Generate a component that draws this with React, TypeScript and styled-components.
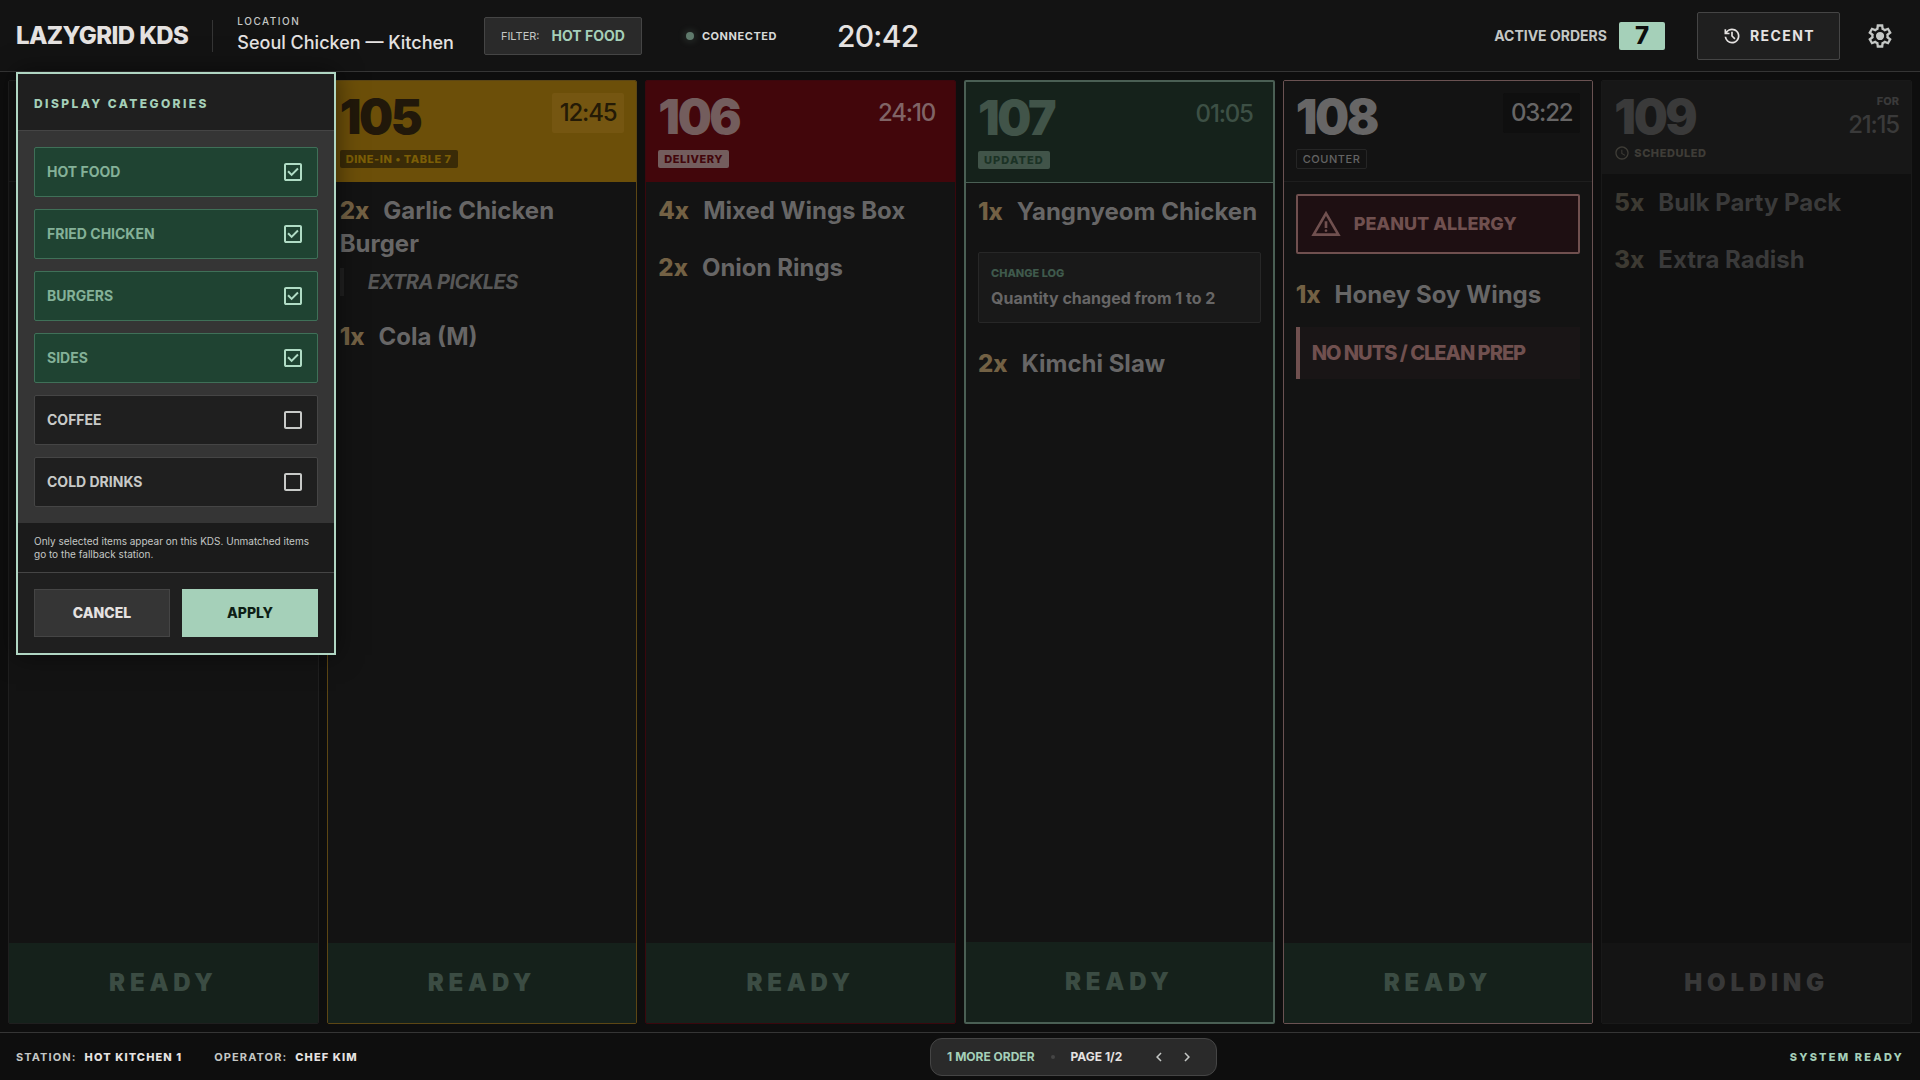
import React, { useState } from "react";
import styled, { createGlobalStyle, css } from "styled-components";
import { MdCheckBoxOutlineBlank, MdSchedule, MdChevronLeft, MdChevronRight } from "react-icons/md";

const mint = "#a5d0b9";

const GlobalStyle = createGlobalStyle`
  *, *::before, *::after { box-sizing: border-box; }
  html, body, #root { height: 100%; }
  body {
    margin: 0;
    background: #0e0e0e;
    color: #e5e2e1;
    font-family: Inter, "Liberation Sans", sans-serif;
    overflow: hidden;
  }
  button { font-family: inherit; cursor: pointer; }
  h1, h2, h3, p { margin: 0; padding: 0; }
  svg { flex: none; }
`;

const Screen = styled.div`
  position: relative;
  display: flex;
  flex-direction: column;
  height: 100%;
`;

const TopBar = styled.header`
  display: flex;
  align-items: center;
  justify-content: space-between;
  flex: none;
  height: 72px;
  padding: 0 16px;
  background: #131313;
  border-bottom: 1px solid #353535;
`;

const Group = styled.div<{ $gap: number }>`
  display: flex;
  align-items: center;
  gap: ${(p) => p.$gap}px;
`;

const Brand = styled.h1`
  font-size: 24px;
  line-height: 32px;
  font-weight: 800;
  letter-spacing: -0.025em;
`;

const Divider = styled.span`
  width: 1px;
  height: 32px;
  background: #353535;
`;

const Place = styled.div`
  display: flex;
  flex-direction: column;
`;

const PlaceLabel = styled.span`
  font-size: 10px;
  line-height: 15px;
  font-weight: 500;
  letter-spacing: 0.15em;
  color: #c4c7c5;
`;

const PlaceName = styled.span`
  font-size: 18px;
  line-height: 28px;
  font-weight: 500;
`;

const FilterButton = styled.button`
  display: flex;
  align-items: center;
  gap: 12px;
  height: 38px;
  margin-left: 6px;
  padding: 0 16px;
  background: #2a2a2a;
  border: 1px solid #454545;
  border-radius: 2px;
  color: ${mint};
  font-size: 14px;
  line-height: 20px;
  font-weight: 700;
`;

const FilterLabel = styled.span`
  color: #c4c7c5;
  font-size: 11px;
  font-weight: 400;
`;

const Connection = styled.div`
  display: flex;
  align-items: center;
  gap: 8px;
  margin-left: 20px;
  font-size: 11px;
  line-height: 16px;
  font-weight: 700;
  letter-spacing: 0.05em;
  color: #d8dad8;
`;

const Dot = styled.span`
  width: 8px;
  height: 8px;
  border-radius: 50%;
  background: #5f7a6c;
  box-shadow: 0 0 8px rgba(165, 208, 185, 0.3);
`;

const Clock = styled.time`
  margin-left: 36px;
  font-size: 30px;
  line-height: 36px;
  font-weight: 500;
  letter-spacing: -0.025em;
`;

const OrdersLabel = styled.span`
  font-size: 14px;
  line-height: 20px;
  font-weight: 700;
  color: #c4c7c5;
`;

const OrdersCount = styled.span`
  padding: 0 16px;
  background: ${mint};
  border-radius: 2px;
  color: #0e0e0e;
  font-size: 24px;
  line-height: 28px;
  font-weight: 800;
`;

const RecentButton = styled.button`
  display: flex;
  align-items: center;
  gap: 8px;
  height: 48px;
  padding: 0 24px;
  background: #1f1f1f;
  border: 1px solid #454545;
  border-radius: 2px;
  color: #e5e2e1;
  font-size: 14px;
  line-height: 20px;
  font-weight: 700;
  letter-spacing: 0.1em;
`;

const IconButton = styled.button<{ $size: number }>`
  display: flex;
  align-items: center;
  justify-content: center;
  width: ${(p) => p.$size}px;
  height: ${(p) => p.$size}px;
  padding: 0;
  border: 0;
  background: none;
  color: #c4c7c5;
`;

const Board = styled.main`
  flex: 1;
  min-height: 0;
  display: grid;
  grid-template-columns: repeat(6, minmax(0, 1fr));
  gap: 8px;
  padding: 8px;
`;

type Tone = "plain" | "late" | "overdue" | "updated" | "allergy" | "held";

const tones = {
  plain: { edge: "#1f1f1f", width: 1, head: "#131313", rule: "#1f1f1f", number: "#6b6a6a", time: "#6b6a6a", chip: "#131313", timeBg: "#0f0f0f" },
  late: { edge: "#5c4614", width: 1, head: "#6c4f09", rule: "#6c4f09", number: "#21180a", time: "#241a06", chip: "#7c5e06", timeBg: "#755611" },
  overdue: { edge: "#3a070d", width: 1, head: "#42060b", rule: "#42060b", number: "#735d5d", time: "#806466", chip: "#42060b", timeBg: "transparent" },
  updated: { edge: "#4a5f54", width: 2, head: "#15221b", rule: "#4a5f54", number: "#415449", time: "#3d5045", chip: "#1b3225", timeBg: "transparent" },
  allergy: { edge: "#6a5252", width: 1, head: "#131313", rule: "#1e1e1e", number: "#676666", time: "#676666", chip: "#646464", timeBg: "#0f0f0f" },
  held: { edge: "#191919", width: 1, head: "#171717", rule: "#171717", number: "#3a3a3a", time: "#3a3a3a", chip: "#3f3d37", timeBg: "transparent" },
};

const Ticket = styled.article<{ $tone: Tone }>`
  display: flex;
  flex-direction: column;
  min-height: 0;
  overflow: hidden;
  background: ${(p) => (p.$tone === "held" ? "#101010" : "#131313")};
  border: ${(p) => tones[p.$tone].width}px solid ${(p) => tones[p.$tone].edge};
  border-radius: 2px;
`;

const TicketHead = styled.header<{ $tone: Tone }>`
  display: flex;
  justify-content: space-between;
  align-items: flex-start;
  min-height: ${(p) => (p.$tone === "held" ? 93 : 101)}px;
  padding: 12px;
  background: ${(p) => tones[p.$tone].head};
  border-bottom: 1px solid ${(p) => tones[p.$tone].rule};
`;

const TicketId = styled.div<{ $tone: Tone }>`
  display: flex;
  flex-direction: column;
  align-items: flex-start;
  gap: ${(p) => (p.$tone === "held" ? 4 : 8)}px;
`;

const TicketNumber = styled.h2<{ $tone: Tone }>`
  font-size: 48px;
  line-height: 48px;
  font-weight: 900;
  letter-spacing: -0.05em;
  color: ${(p) => tones[p.$tone].number};
`;

const Chip = styled.span<{ $tone: Tone }>`
  margin: 1px 0;
  padding: 0 6px;
  border-radius: 2px;
  font-size: 11px;
  line-height: 18px;
  font-weight: 800;
  letter-spacing: 0.05em;
  color: ${(p) => tones[p.$tone].chip};
  ${(p) => p.$tone === "late" && css`background: #3a2b07;`}
  ${(p) => p.$tone === "overdue" && css`background: #735d5d;`}
  ${(p) => p.$tone === "updated" && css`background: #415449; letter-spacing: 0.1em;`}
  ${(p) =>
    p.$tone === "allergy" &&
    css`
      margin: 0;
      border: 1px solid #252525;
      font-weight: 500;
    `}
`;

const Scheduled = styled.span`
  display: flex;
  align-items: center;
  gap: 4px;
  font-size: 11px;
  line-height: 16px;
  font-weight: 800;
  letter-spacing: 0.05em;
  color: #3f3d37;
`;

const TimeStack = styled.div`
  display: flex;
  flex-direction: column;
  align-items: flex-end;
`;

const DueLabel = styled.span`
  font-size: 11px;
  line-height: 16px;
  font-weight: 800;
  color: #3a3a3a;
`;

const Timer = styled.time<{ $tone: Tone }>`
  padding: ${(p) => (p.$tone === "held" ? "0" : "4px 8px")};
  background: ${(p) => tones[p.$tone].timeBg};
  border-radius: 2px;
  font-size: 24px;
  line-height: 32px;
  font-weight: 500;
  letter-spacing: -0.05em;
  color: ${(p) => tones[p.$tone].time};
`;

const TicketBody = styled.div`
  flex: 1;
  min-height: 0;
  display: flex;
  flex-direction: column;
  gap: 24px;
  padding: 12px;
`;

const Item = styled.p<{ $dim?: boolean }>`
  font-size: 24px;
  line-height: 33px;
  font-weight: 700;
  color: ${(p) => (p.$dim ? "#3a3a3a" : "#676666")};
`;

const Qty = styled.span<{ $dim?: boolean }>`
  margin-right: 14px;
  font-weight: 800;
  color: ${(p) => (p.$dim ? "#3d3a32" : "#736144")};
`;

const Modifier = styled.p`
  margin-top: 8px;
  padding-left: 24px;
  border-left: 4px solid #202020;
  font-size: 20px;
  line-height: 28px;
  font-weight: 700;
  font-style: italic;
  letter-spacing: -0.025em;
  color: #575757;
`;

const ChangeLog = styled.section`
  padding: 12px;
  background: #191919;
  border: 1px solid #272727;
  border-radius: 2px;
`;

const ChangeTitle = styled.h3`
  margin-bottom: 6px;
  font-size: 11px;
  line-height: 16px;
  font-weight: 800;
  color: #3f5a4c;
`;

const ChangeText = styled.p`
  font-size: 16px;
  line-height: 23px;
  font-weight: 700;
  color: #676666;
`;

const AllergyAlert = styled.div`
  display: flex;
  align-items: center;
  gap: 12px;
  height: 60px;
  padding: 0 12px;
  background: #1e0f12;
  border: 2px solid #70504f;
  border-radius: 2px;
  color: #70504f;
  font-size: 18px;
  line-height: 28px;
  font-weight: 800;
`;

const PrepNote = styled.p`
  margin-top: 16px;
  padding: 12px;
  background: #191516;
  border-left: 4px solid #70504f;
  font-size: 20px;
  line-height: 28px;
  font-weight: 800;
  letter-spacing: -0.05em;
  color: #70504f;
`;

const BumpButton = styled.button<{ $held?: boolean }>`
  flex: none;
  height: 80px;
  border: 0;
  background: ${(p) => (p.$held ? "#141414" : "#15211b")};
  color: ${(p) => (p.$held ? "#383838" : "#3b4c43")};
  font-size: 24px;
  line-height: 32px;
  font-weight: 900;
  letter-spacing: 0.2em;
`;

const BottomBar = styled.footer`
  display: flex;
  align-items: center;
  justify-content: space-between;
  flex: none;
  height: 48px;
  padding: 0 16px;
  background: #0e0e0e;
  border-top: 1px solid #353535;
  font-size: 11px;
  line-height: 16px;
  font-weight: 700;
  letter-spacing: 0.1em;
  color: #c4c7c5;
`;

const FootValue = styled.b`
  margin-left: 8px;
  font-weight: 800;
  color: #e5e2e1;
`;

const Pager = styled.nav`
  display: flex;
  align-items: center;
  height: 38px;
  padding: 0 16px;
  background: #2a2a2a;
  border: 1px solid #454545;
  border-radius: 12px;
  font-size: 12px;
  line-height: 16px;
  font-weight: 700;
  letter-spacing: 0;
  color: #e5e2e1;
`;

const More = styled.span`
  color: ${mint};
`;

const Bullet = styled.span`
  width: 4px;
  height: 4px;
  margin: 0 16px;
  border-radius: 50%;
  background: #454545;
`;

const Arrows = styled.div`
  display: flex;
  gap: 10px;
  margin: 0 4px 0 28px;
`;

const Status = styled.span`
  font-weight: 800;
  letter-spacing: 0.2em;
  color: ${mint};
`;

const Panel = styled.form`
  position: absolute;
  z-index: 2;
  top: 72px;
  left: 16px;
  width: 320px;
  background: #1f1f1f;
  border: 2px solid #b0d6c3;
  box-shadow: 0 0 24px rgba(0, 0, 0, 0.5);
`;

const PanelTitle = styled.h2`
  padding: 22px 16px 18px;
  border-bottom: 1px solid #454545;
  font-size: 12px;
  line-height: 16px;
  font-weight: 800;
  letter-spacing: 0.2em;
  color: ${mint};
`;

const OptionList = styled.div`
  display: flex;
  flex-direction: column;
  gap: 12px;
  padding: 16px;
  background: #353535;
`;

const Option = styled.label<{ $on: boolean }>`
  position: relative;
  display: flex;
  align-items: center;
  justify-content: space-between;
  height: 50px;
  padding: 0 12px;
  background: ${(p) => (p.$on ? "#1f4332" : "#1f1f1f")};
  border: 1px solid ${(p) => (p.$on ? "#3f7058" : "#454545")};
  border-radius: 2px;
  color: ${(p) => (p.$on ? "#84b198" : "#c8cac8")};
  font-size: 14px;
  line-height: 20px;
  font-weight: 700;
  cursor: pointer;
  svg { color: ${(p) => (p.$on ? "#b0dcc5" : "#c8cac8")}; }
`;

const Tick = styled.input`
  position: absolute;
  inset: 0;
  width: 100%;
  height: 100%;
  margin: 0;
  opacity: 0;
  cursor: pointer;
`;

const Hint = styled.p`
  padding: 12px 16px 11px;
  background: #1b1b1b;
  border-bottom: 1px solid #454545;
  font-size: 10px;
  line-height: 13px;
  color: #c4c7c5;
`;

const Actions = styled.div`
  display: grid;
  grid-template-columns: 1fr 1fr;
  gap: 12px;
  padding: 16px;
`;

const ActionButton = styled.button<{ $primary?: boolean }>`
  height: 48px;
  background: ${(p) => (p.$primary ? mint : "#353535")};
  border: 1px solid ${(p) => (p.$primary ? mint : "#454545")};
  color: ${(p) => (p.$primary ? "#0e1f16" : "#e5e2e1")};
  font-size: 14px;
  line-height: 20px;
  font-weight: 800;
`;

const Glyph = ({ size, d }: { size: number; d: string }) => (
  <svg width={size} height={size} viewBox="0 0 24 24" fill="currentColor" aria-hidden="true">
    <path d={d} />
  </svg>
);

const historyPath =
  "M12 21q-3.45 0-6.012-2.288T3.05 13H5.1q.35 2.6 2.313 4.3T12 19q2.925 0 4.963-2.037T19 12t-2.037-4.963T12 5q-1.725 0-3.225.8T6.25 8H9v2H3V4h2v2.35q1.275-1.6 3.113-2.475T12 3q1.875 0 3.513.713t2.85 1.924 1.925 2.85T21 12t-.712 3.513-1.925 2.85-2.85 1.925T12 21m2.8-4.8L11 12.4V7h2v4.6l3.2 3.2z";

const gearPath =
  "m9.25 22l-.4-3.2q-.325-.125-.612-.3t-.563-.375L4.7 19.375l-2.75-4.75l2.575-1.95Q4.5 12.5 4.5 12.338v-.675q0-.163.025-.338L1.95 9.375l2.75-4.75l2.975 1.25q.275-.2.575-.375t.6-.3l.4-3.2h5.5l.4 3.2q.325.125.613.3t.562.375l2.975-1.25l2.75 4.75l-2.575 1.95q.025.175.025.338v.674q0 .163-.05.338l2.575 1.95l-2.75 4.75l-2.95-1.25q-.275.2-.575.375t-.6.3l-.4 3.2zM11 20h1.975l.35-2.65q.775-.2 1.438-.587t1.212-.938l2.475 1.025l.975-1.7l-2.15-1.625q.125-.35.175-.737T17.5 12t-.05-.787t-.175-.738l2.15-1.625l-.975-1.7l-2.475 1.05q-.55-.575-1.212-.962t-1.438-.588L13 4h-1.975l-.35 2.65q-.775.2-1.437.588t-1.213.937L5.55 7.15l-.975 1.7l2.15 1.6q-.125.375-.175.75t-.05.8q0 .4.05.775t.175.75l-2.15 1.625l.975 1.7l2.475-1.05q.55.575 1.213.963t1.437.587zm1.05-4.5q1.45 0 2.475-1.025T15.55 12t-1.025-2.475T12.05 8.5q-1.475 0-2.488 1.025T8.55 12t1.013 2.475T12.05 15.5";

const checkedPath =
  "m10.6 16.2 7.05-7.05-1.4-1.4-5.65 5.65-2.85-2.85-1.4 1.4zM5 21q-.825 0-1.412-.587T3 19V5q0-.825.588-1.412T5 3h14q.825 0 1.413.588T21 5v14q0 .825-.587 1.413T19 21zm0-2h14V5H5z";

const warningPath =
  "M1 21 12 2l11 19zm3.45-2h15.1L12 6zM12 18q.425 0 .713-.288T13 17t-.288-.712T12 16t-.712.288T11 17t.288.713T12 18m-1-3h2v-5h-2z";

type Order = {
  id: string;
  tone: Tone;
  chip: string;
  time: string;
  body: React.ReactNode;
};

const Line = ({ qty, name, dim, children }: { qty: number; name: string; dim?: boolean; children?: React.ReactNode }) => (
  <div>
    <Item $dim={dim}>
      <Qty $dim={dim}>{qty}x</Qty>
      {name}
    </Item>
    {children}
  </div>
);

const orders: Order[] = [
  { id: "", tone: "plain", chip: "", time: "", body: null },
  {
    id: "105",
    tone: "late",
    chip: "DINE-IN • TABLE 7",
    time: "12:45",
    body: (
      <>
        <Line qty={2} name="Garlic Chicken Burger">
          <Modifier>EXTRA PICKLES</Modifier>
        </Line>
        <Line qty={1} name="Cola (M)" />
      </>
    ),
  },
  {
    id: "106",
    tone: "overdue",
    chip: "DELIVERY",
    time: "24:10",
    body: (
      <>
        <Line qty={4} name="Mixed Wings Box" />
        <Line qty={2} name="Onion Rings" />
      </>
    ),
  },
  {
    id: "107",
    tone: "updated",
    chip: "UPDATED",
    time: "01:05",
    body: (
      <>
        <Line qty={1} name="Yangnyeom Chicken" />
        <ChangeLog>
          <ChangeTitle>CHANGE LOG</ChangeTitle>
          <ChangeText>Quantity changed from 1 to 2</ChangeText>
        </ChangeLog>
        <Line qty={2} name="Kimchi Slaw" />
      </>
    ),
  },
  {
    id: "108",
    tone: "allergy",
    chip: "COUNTER",
    time: "03:22",
    body: (
      <>
        <AllergyAlert role="alert">
          <Glyph size={32} d={warningPath} />
          PEANUT ALLERGY
        </AllergyAlert>
        <Line qty={1} name="Honey Soy Wings">
          <PrepNote>NO NUTS / CLEAN PREP</PrepNote>
        </Line>
      </>
    ),
  },
  {
    id: "109",
    tone: "held",
    chip: "SCHEDULED",
    time: "21:15",
    body: (
      <>
        <Line dim qty={5} name="Bulk Party Pack" />
        <Line dim qty={3} name="Extra Radish" />
      </>
    ),
  },
];

const OrderTicket = ({ order }: { order: Order }) => {
  const { tone } = order;
  const held = tone === "held";
  return (
    <Ticket $tone={tone}>
      <TicketHead $tone={tone}>
        {order.id && (
          <>
            <TicketId $tone={tone}>
              <TicketNumber $tone={tone}>{order.id}</TicketNumber>
              {held ? (
                <Scheduled>
                  <MdSchedule size={16} />
                  {order.chip}
                </Scheduled>
              ) : (
                <Chip $tone={tone}>{order.chip}</Chip>
              )}
            </TicketId>
            <TimeStack>
              {held && <DueLabel>FOR</DueLabel>}
              <Timer $tone={tone}>{order.time}</Timer>
            </TimeStack>
          </>
        )}
      </TicketHead>
      <TicketBody>{order.body}</TicketBody>
      <BumpButton type="button" $held={held}>
        {held ? "HOLDING" : "READY"}
      </BumpButton>
    </Ticket>
  );
};

const categories = ["HOT FOOD", "FRIED CHICKEN", "BURGERS", "SIDES", "COFFEE", "COLD DRINKS"];

const CategoryPanel = () => {
  const [chosen, setChosen] = useState(categories.slice(0, 4));
  const toggle = (name: string) =>
    setChosen((list) => (list.includes(name) ? list.filter((n) => n !== name) : [...list, name]));
  return (
    <Panel onSubmit={(e) => e.preventDefault()}>
      <PanelTitle>DISPLAY CATEGORIES</PanelTitle>
      <OptionList>
        {categories.map((name) => {
          const on = chosen.includes(name);
          return (
            <Option key={name} $on={on}>
              {name}
              <Tick type="checkbox" checked={on} onChange={() => toggle(name)} />
              {on ? <Glyph size={24} d={checkedPath} /> : <MdCheckBoxOutlineBlank size={24} />}
            </Option>
          );
        })}
      </OptionList>
      <Hint>Only selected items appear on this KDS. Unmatched items go to the fallback station.</Hint>
      <Actions>
        <ActionButton type="button">CANCEL</ActionButton>
        <ActionButton type="submit" $primary>
          APPLY
        </ActionButton>
      </Actions>
    </Panel>
  );
};

export default function App() {
  return (
    <>
      <GlobalStyle />
      <Screen>
        <TopBar>
          <Group $gap={24}>
            <Brand>LAZYGRID KDS</Brand>
            <Divider />
            <Place>
              <PlaceLabel>LOCATION</PlaceLabel>
              <PlaceName>Seoul Chicken — Kitchen</PlaceName>
            </Place>
            <FilterButton type="button">
              <FilterLabel>FILTER:</FilterLabel>
              HOT FOOD
            </FilterButton>
            <Connection>
              <Dot />
              CONNECTED
            </Connection>
            <Clock>20:42</Clock>
          </Group>
          <Group $gap={32}>
            <Group $gap={12}>
              <OrdersLabel>ACTIVE ORDERS</OrdersLabel>
              <OrdersCount>7</OrdersCount>
            </Group>
            <Group $gap={16}>
              <RecentButton type="button">
                <Glyph size={20} d={historyPath} />
                RECENT
              </RecentButton>
              <IconButton type="button" $size={48} aria-label="Settings">
                <Glyph size={28} d={gearPath} />
              </IconButton>
            </Group>
          </Group>
        </TopBar>
        <Board>
          {orders.map((order, i) => (
            <OrderTicket key={i} order={order} />
          ))}
        </Board>
        <BottomBar>
          <Group $gap={32}>
            <span>
              STATION:<FootValue>HOT KITCHEN 1</FootValue>
            </span>
            <span>
              OPERATOR:<FootValue>CHEF KIM</FootValue>
            </span>
          </Group>
          <Pager aria-label="Order pages">
            <More>1 MORE ORDER</More>
            <Bullet />
            PAGE 1/2
            <Arrows>
              <IconButton type="button" $size={18} aria-label="Previous page">
                <MdChevronLeft size={18} />
              </IconButton>
              <IconButton type="button" $size={18} aria-label="Next page">
                <MdChevronRight size={18} />
              </IconButton>
            </Arrows>
          </Pager>
          <Status>SYSTEM READY</Status>
        </BottomBar>
        <CategoryPanel />
      </Screen>
    </>
  );
}
